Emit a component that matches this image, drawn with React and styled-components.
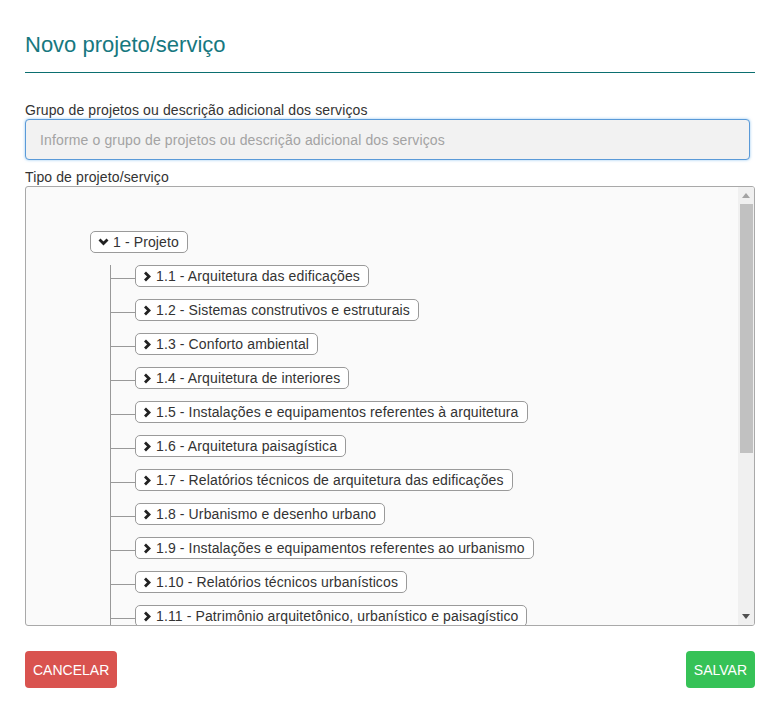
import React from 'react';
import styled, { createGlobalStyle } from 'styled-components';

const GlobalStyle = createGlobalStyle`
    body {
        margin: 0;
        background: #ffffff;
        font-family: "Liberation Sans", Arial, sans-serif;
        color: #333333;
    }
    * {
        box-sizing: border-box;
    }
`

const Page = styled.div`
    display: flex;
    flex-direction: column;
    padding: 0 21px 0 25px;
`

const Title = styled.h1`
    margin: 32px 0 0;
    font-size: 22px;
    line-height: 25px;
    font-weight: 400;
    color: #17787f;
`

const Divider = styled.hr`
    margin: 15px 0 0;
    border: 0;
    border-top: 1px solid #0b6f70;
    height: 0;
`

const Label = styled.label`
    display: block;
    margin-top: ${props => props.$top || 0}px;
    font-size: 14px;
    line-height: 17px;
    letter-spacing: 0.12px;
    color: #333333;
`

const Input = styled.input`
    display: block;
    width: calc(100% - 5px);
    height: 41px;
    margin-bottom: 9px;
    padding: 0 14px;
    border: 1px solid #5a9ad8;
    border-radius: 4px;
    background: #f2f2f2;
    box-shadow: 0 0 3px rgba(102, 175, 233, 0.7);
    font-family: inherit;
    font-size: 14px;
    letter-spacing: 0.14px;
    color: #333333;
    outline: none;

    &::placeholder {
        color: #a3a3a3;
    }
`

const TreeBox = styled.div`
    display: flex;
    height: 440px;
    border: 1px solid #a9a9a9;
    border-radius: 3px;
    background: #fafafa;
    overflow: hidden;
`

const TreeView = styled.div`
    flex: 1;
    padding: 44px 0 0 64px;
    overflow: hidden;
`

const Scrollbar = styled.div`
    display: flex;
    flex-direction: column;
    width: 16px;
    background: #f0f0f0;
`

const ScrollArrow = styled.div`
    display: flex;
    align-items: center;
    justify-content: center;
    height: 17px;
    color: ${props => props.$disabled ? '#a3a3a3' : '#505050'};
`

const Thumb = styled.div`
    height: 249px;
    margin: 0 1px 0 2px;
    background: #c1c1c1;
`

const Spacer = styled.div`
    flex: 1;
`

const Node = styled.span`
    display: inline-flex;
    align-items: center;
    gap: 4px;
    height: 22px;
    padding: 0 8px 0 7px;
    border: 1px solid #9a9a9a;
    border-radius: 5px;
    background: #ffffff;
    font-size: 14px;
    letter-spacing: 0.12px;
    color: #333333;
    white-space: nowrap;
`

const ChildList = styled.ul`
    list-style: none;
    margin: 0 0 0 20px;
    padding: 0 0 40px;
    border-left: 1px solid #999999;
`

const ChildItem = styled.li`
    display: flex;
    align-items: center;
    margin-top: 12px;
`

const Connector = styled.span`
    width: 24px;
    height: 1px;
    margin-top: 4px;
    background: #999999;
`

const Footer = styled.div`
    display: flex;
    justify-content: space-between;
    margin-top: 25px;
`

const Button = styled.button`
    height: 37px;
    padding: 0 8px;
    border: 0;
    border-radius: 4px;
    background: ${props => props.$color};
    font-family: inherit;
    font-size: 14px;
    color: #ffffff;
    text-transform: uppercase;
`

const Chevron = ({ down }) => (
    down ? (
        <svg width="11" height="10" viewBox="0 0 11 10">
            <polyline points="1.5,2.5 5.5,6.5 9.5,2.5" fill="none" stroke="#222" strokeWidth="2.8" />
        </svg>
    ) : (
        <svg width="9" height="11" viewBox="0 0 9 11">
            <polyline points="2,1.5 6,5.5 2,9.5" fill="none" stroke="#222" strokeWidth="2.8" />
        </svg>
    )
)

const Triangle = ({ down }) => (
    <svg width="8" height="5" viewBox="0 0 8 5">
        <polygon points={down ? '0,0 8,0 4,5' : '0,5 8,5 4,0'} fill="currentColor" />
    </svg>
)

const children = [
    '1.1 - Arquitetura das edificações',
    '1.2 - Sistemas construtivos e estruturais',
    '1.3 - Conforto ambiental',
    '1.4 - Arquitetura de interiores',
    '1.5 - Instalações e equipamentos referentes à arquitetura',
    '1.6 - Arquitetura paisagística',
    '1.7 - Relatórios técnicos de arquitetura das edificações',
    '1.8 - Urbanismo e desenho urbano',
    '1.9 - Instalações e equipamentos referentes ao urbanismo',
    '1.10 - Relatórios técnicos urbanísticos',
    '1.11 - Patrimônio arquitetônico, urbanístico e paisagístico',
]

function App() {
  return (
    <Page>
        <GlobalStyle />
        <Title>Novo projeto/serviço</Title>
        <Divider />

        <Label $top={29}>Grupo de projetos ou descrição adicional dos serviços</Label>
        <Input placeholder="Informe o grupo de projetos ou descrição adicional dos serviços" />

        <Label>Tipo de projeto/serviço</Label>
        <TreeBox>
            <TreeView>
                <Node><Chevron down />1 - Projeto</Node>
                <ChildList>
                    {children.map(item => (
                        <ChildItem key={item}>
                            <Connector />
                            <Node><Chevron />{item}</Node>
                        </ChildItem>
                    ))}
                </ChildList>
            </TreeView>
            <Scrollbar>
                <ScrollArrow $disabled><Triangle /></ScrollArrow>
                <Thumb />
                <Spacer />
                <ScrollArrow><Triangle down /></ScrollArrow>
            </Scrollbar>
        </TreeBox>

        <Footer>
            <Button $color="#d9534f">Cancelar</Button>
            <Button $color="#36c257">Salvar</Button>
        </Footer>
    </Page>
  )
}

export default App;
